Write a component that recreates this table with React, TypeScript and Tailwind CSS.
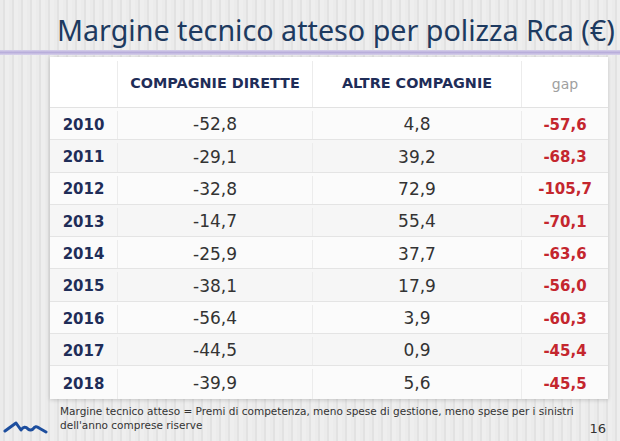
const rows = [
  { y: "2010", d: "-52,8", a: "4,8", g: "-57,6" },
  { y: "2011", d: "-29,1", a: "39,2", g: "-68,3" },
  { y: "2012", d: "-32,8", a: "72,9", g: "-105,7" },
  { y: "2013", d: "-14,7", a: "55,4", g: "-70,1" },
  { y: "2014", d: "-25,9", a: "37,7", g: "-63,6" },
  { y: "2015", d: "-38,1", a: "17,9", g: "-56,0" },
  { y: "2016", d: "-56,4", a: "3,9", g: "-60,3" },
  { y: "2017", d: "-44,5", a: "0,9", g: "-45,4" },
  { y: "2018", d: "-39,9", a: "5,6", g: "-45,5" },
];

function Logo() {
  return (
    <svg width="46" height="14" viewBox="0 0 46 14" className="shrink-0">
      <path
        d="M2 11 L13 3 L18 10 Q21.5 5 25 9 Q27.5 11 30 9 Q32.5 5 36 8 L43 12"
        fill="none"
        stroke="#1d4e9e"
        strokeWidth="3"
        strokeLinejoin="round"
        strokeLinecap="round"
      />
    </svg>
  );
}

export default function App() {
  return (
    <div className="w-[620px] h-[441px] overflow-hidden flex flex-col bg-[repeating-linear-gradient(90deg,#ebebeb_0px,#ebebeb_3px,#e2e2e2_3px,#e2e2e2_5px,#eeeeee_5px,#eeeeee_9px)] font-['DejaVu_Sans',sans-serif]">
      <div className="h-[50px] pl-[57px] pt-[14px]">
        <h1 className="text-[#1d3a60] text-[28.7px] leading-[32px] font-['Noto_Sans',sans-serif] whitespace-nowrap">
          Margine tecnico atteso per polizza Rca (€)
        </h1>
      </div>
      <div className="h-[5px] bg-[linear-gradient(180deg,#d6d0ea,#b9aedb_50%,#d9d3ec)]" />
      <div className="h-[2px]" />
      <div className="ml-[50px] w-[558px] bg-white shadow-[0_1px_4px_rgba(0,0,0,0.18)]">
        <div className="grid grid-cols-[68px_195px_209px_86px] h-[51px] pt-[4px] border-b border-[#e2e2e2] text-[14.4px] font-bold text-[#1f2d58]">
          <div className="border-r border-[#ececec]" />
          <div className="flex items-center justify-center border-r border-[#ececec]">COMPAGNIE DIRETTE</div>
          <div className="flex items-center justify-center border-r border-[#ececec]">ALTRE COMPAGNIE</div>
          <div className="flex items-center justify-center font-normal text-[14px] text-[#a0a0a0]">gap</div>
        </div>
        {rows.map((r, i) => (
          <div
            key={r.y}
            className={`grid grid-cols-[68px_195px_209px_86px] h-[32.3px] pt-[3px] ${i < rows.length - 1 ? "border-b border-[#e4e4e4]" : ""} ${i % 2 === 0 ? "bg-[#fbfbfb]" : "bg-[#f6f6f6]"}`}
          >
            <div className="flex items-center justify-center border-r border-[#ececec] text-[15px] font-bold text-[#1f2d58]">{r.y}</div>
            <div className="flex items-center justify-center border-r border-[#ececec] text-[17px] text-[#333]">{r.d}</div>
            <div className="flex items-center justify-center border-r border-[#ececec] text-[17px] text-[#333]">{r.a}</div>
            <div className="flex items-center justify-center text-[15px] font-bold text-[#c4262e]">{r.g}</div>
          </div>
        ))}
      </div>
      <div className="flex items-start mt-[5px] pl-[3px] pr-[14px]">
        <div className="pt-[16px] mr-[11px]">
          <Logo />
        </div>
        <div className="flex-1 text-[10.5px] leading-[14px] text-[#333]">
          <div>Margine tecnico atteso = Premi di competenza, meno spese di gestione, meno spese per i sinistri</div>
          <div>dell'anno comprese riserve</div>
        </div>
        <div className="text-[13px] text-[#333] pt-[15px]">16</div>
      </div>
    </div>
  );
}
